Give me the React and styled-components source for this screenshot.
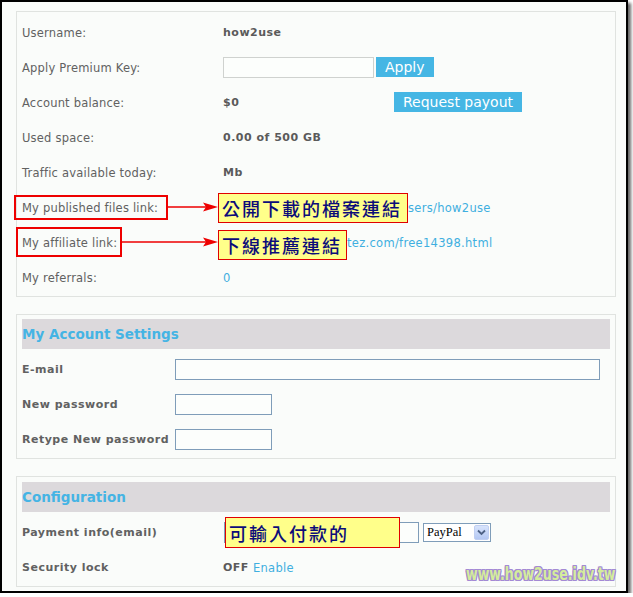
import React from 'react';
import styled, { createGlobalStyle } from 'styled-components';

const GlobalStyle = createGlobalStyle`
  body {
    margin: 0;
    background: #ffffff;
    font-family: "DejaVu Sans", Verdana, sans-serif;
  }
`;

const Frame = styled.div`
  position: relative;
  box-sizing: border-box;
  width: 628px;
  height: 593px;
  border: 2px solid #000;
  background: #fafcfa;
  box-shadow: 3px 3px 3px rgba(0, 0, 0, 0.6);
  padding: 9px 0 0 14px;
`;

const Panel = styled.div`
  box-sizing: border-box;
  width: 600px;
  border: 1px solid #e0e3e0;
  padding: ${p => p.$pad || '3px 5px 1px'};
  margin-top: ${p => p.$gap || 0}px;
`;

const Header = styled.div`
  height: 30px;
  background: #dcd9dc;
  color: #45b4e4;
  font-size: 13.5px;
  font-weight: bold;
  display: flex;
  align-items: center;
  margin-bottom: 3px;
`;

const Row = styled.div`
  display: grid;
  grid-template-columns: ${p => p.$label}px 1fr;
  align-items: center;
  height: 35px;
`;

const Label = styled.div`
  font-size: ${p => (p.$bold ? 11 : 11.5)}px;
  letter-spacing: ${p => (p.$bold ? 0.5 : 0.2)}px;
  color: #616161;
  font-weight: ${p => (p.$bold ? 'bold' : 'normal')};
  white-space: nowrap;
`;

const Value = styled.div`
  display: flex;
  align-items: center;
  font-size: 11px;
  letter-spacing: 0.5px;
  color: #5a5a5a;
  white-space: nowrap;
  padding-left: ${p => p.$indent || 0}px;
`;

const Strong = styled.span`
  font-weight: bold;
  width: ${p => (p.$w ? `${p.$w}px` : 'auto')};
  margin-right: 4px;
`;

const Link = styled.a`
  color: #3fafe0;
  text-decoration: none;
  font-weight: normal;
  font-size: 11.5px;
  letter-spacing: 0.3px;
`;

const TextInput = styled.input`
  box-sizing: border-box;
  width: ${p => p.$w}px;
  height: 21px;
  border: 1px solid ${p => (p.$soft ? '#cfd2cf' : '#7f9db9')};
  background: #fcfefc;
  padding: 0 3px;
  margin: 0 0 0 ${p => p.$ml || 0}px;
  outline: none;
`;

const Button = styled.button`
  height: 20px;
  border: none;
  background: #45b6e4;
  color: #fff;
  font-family: "DejaVu Sans", Verdana, sans-serif;
  font-size: 14px;
  padding: 0 ${p => p.$px || 9}px;
  margin-left: ${p => p.$ml || 0}px;
  margin-bottom: ${p => p.$raise || 0}px;
  line-height: 20px;
  cursor: pointer;
`;

const Select = styled.div`
  box-sizing: border-box;
  display: inline-flex;
  align-items: center;
  justify-content: space-between;
  width: 68px;
  height: 19px;
  margin-left: 4px;
  border: 1px solid #7f9db9;
  background: #fff;
  padding: 0 1px 0 3px;
  font-family: "Liberation Serif", "Times New Roman", serif;
  font-size: 12.5px;
  letter-spacing: 0;
  color: #000;
`;

const DropButton = styled.span`
  display: flex;
  align-items: center;
  justify-content: center;
  width: 15px;
  height: 15px;
  border-radius: 2px;
  background: linear-gradient(#d8e4fc, #b4c8f4);
  border: 1px solid #c0cff2;
  box-sizing: border-box;
`;

const Overlay = styled.svg`
  position: absolute;
  left: -2px;
  top: -2px;
  width: 628px;
  height: 593px;
  pointer-events: none;
`;

const Callout = styled.div`
  position: absolute;
  box-sizing: border-box;
  left: ${p => p.$x - 2}px;
  top: ${p => p.$y - 2}px;
  width: ${p => p.$w}px;
  height: ${p => p.$h}px;
  background: #ffff8a;
  border: 1px solid #e00000;
  color: #0c0c7a;
  font-family: "Noto Sans CJK TC", "Noto Sans CJK SC", sans-serif;
  font-size: 18px;
  font-weight: 500;
  letter-spacing: 2px;
  padding-left: 3px;
  display: flex;
  align-items: center;
  white-space: nowrap;
`;

const Watermark = styled.div`
  position: absolute;
  left: 464px;
  top: 561px;
  font-family: "DejaVu Sans Condensed", "DejaVu Sans", sans-serif;
  font-weight: bold;
  font-size: 14px;
  line-height: 16px;
  letter-spacing: 0;
  color: #d4ec9c;
  transform: scaleY(1.3);
  transform-origin: left top;
  text-shadow: 1px 0 #a48ad4, -1px 0 #a48ad4, 0 1px #a48ad4, 0 -1px #a48ad4,
    1px 1px #a48ad4, -1px -1px #a48ad4, 1px -1px #a48ad4, -1px 1px #a48ad4;
`;

function Arrow({ x1, x2, y }) {
  return (
    <g>
      <line x1={x1} y1={y} x2={x2 - 12} y2={y} stroke="#ee0000" strokeWidth="1.5" />
      <polygon points={`${x2 - 15},${y - 4.5} ${x2},${y} ${x2 - 15},${y + 4.5} ${x2 - 12},${y}`} fill="#ee0000" />
    </g>
  );
}

export default function App() {
  return (
    <>
      <GlobalStyle />
      <Frame>
        <Panel $pad="3px 5px 1px">
          <Row $label={201}><Label>Username:</Label><Value><Strong>how2use</Strong></Value></Row>
          <Row $label={201}>
            <Label>Apply Premium Key:</Label>
            <Value><TextInput $w={151} $soft /><Button $ml={2} $px={9} $raise={2}>Apply</Button></Value>
          </Row>
          <Row $label={201}>
            <Label>Account balance:</Label>
            <Value><Strong $w={167}>$0</Strong><Button $raise={1}>Request payout</Button></Value>
          </Row>
          <Row $label={201}><Label>Used space:</Label><Value><Strong>0.00 of 500 GB</Strong></Value></Row>
          <Row $label={201}><Label>Traffic available today:</Label><Value><Strong>Mb</Strong></Value></Row>
          <Row $label={201}>
            <Label>My published files link:</Label>
            <Value $indent={185}><Link href="#">sers/how2use</Link></Value>
          </Row>
          <Row $label={201}>
            <Label>My affiliate link:</Label>
            <Value $indent={124}><Link href="#">tez.com/free14398.html</Link></Value>
          </Row>
          <Row $label={201}><Label>My referrals:</Label><Value><Link href="#">0</Link></Value></Row>
        </Panel>

        <Panel $gap={17} $pad="4px 5px 1px">
          <Header>My Account Settings</Header>
          <Row $label={153}><Label $bold>E-mail</Label><Value><TextInput $w={425} /></Value></Row>
          <Row $label={153}><Label $bold>New password</Label><Value><TextInput $w={97} /></Value></Row>
          <Row $label={153}><Label $bold>Retype New password</Label><Value><TextInput $w={97} /></Value></Row>
        </Panel>

        <Panel $gap={17} $pad="5px 5px 1px">
          <Header>Configuration</Header>
          <Row $label={201}>
            <Label $bold>Payment info(email)</Label>
            <Value>
              <TextInput $w={195} $ml={1} />
              <Select>
                PayPal
                <DropButton>
                  <svg width="9" height="7" viewBox="0 0 9 7">
                    <path d="M1 1.5 L4.5 5 L8 1.5" fill="none" stroke="#4d6185" strokeWidth="1.8" />
                  </svg>
                </DropButton>
              </Select>
            </Value>
          </Row>
          <Row $label={201}>
            <Label $bold>Security lock</Label>
            <Value><Strong>OFF</Strong><Link href="#">Enable</Link></Value>
          </Row>
        </Panel>

        <Overlay viewBox="0 0 628 593">
          <rect x="15" y="196" width="152" height="23" fill="none" stroke="#ee0000" strokeWidth="2" />
          <rect x="17" y="228" width="104" height="28" fill="none" stroke="#ee0000" strokeWidth="2" />
          <Arrow x1={168} x2={218} y={207} />
          <Arrow x1={122} x2={218} y={242} />
        </Overlay>

        <Callout $x={218} $y={193} $w={190} $h={30}>公開下載的檔案連結</Callout>
        <Callout $x={218} $y={230} $w={129} $h={30}>下線推薦連結</Callout>
        <Callout $x={225} $y={517} $w={175} $h={31}>可輸入付款的</Callout>

        <Watermark>www.how2use.idv.tw</Watermark>
      </Frame>
    </>
  );
}
